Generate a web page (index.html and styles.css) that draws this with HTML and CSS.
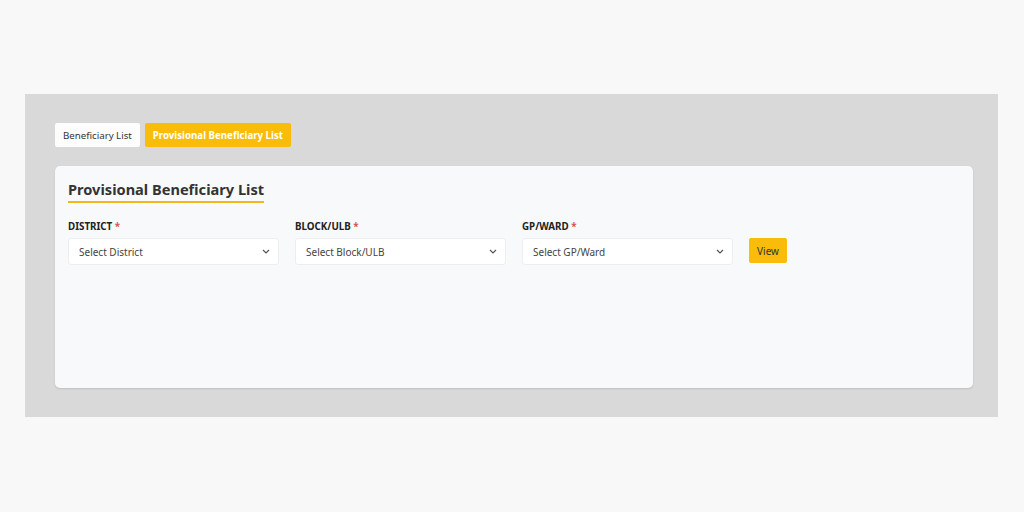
FILE: index.html
```html
<!DOCTYPE html>
<html>
<head>
<meta charset="utf-8">
<link rel="stylesheet" href="styles.css">
</head>
<body>
<div class="page">
  <div class="panel">
    <div class="tabs">
      <button class="tab">Beneficiary List</button>
      <button class="tab active">Provisional Beneficiary List</button>
    </div>
    <div class="card">
      <h2 class="title">Provisional Beneficiary List</h2>
      <div class="filters">
        <div class="field">
          <label class="label">DISTRICT <span class="req">*</span></label>
          <div class="select"><span>Select District</span><svg width="8" height="5" viewBox="0 0 8 5"><path d="M1 1l3 3 3-3" fill="none" stroke="#555" stroke-width="1.2"/></svg></div>
        </div>
        <div class="field">
          <label class="label">BLOCK/ULB <span class="req">*</span></label>
          <div class="select"><span>Select Block/ULB</span><svg width="8" height="5" viewBox="0 0 8 5"><path d="M1 1l3 3 3-3" fill="none" stroke="#555" stroke-width="1.2"/></svg></div>
        </div>
        <div class="field">
          <label class="label">GP/WARD <span class="req">*</span></label>
          <div class="select"><span>Select GP/Ward</span><svg width="8" height="5" viewBox="0 0 8 5"><path d="M1 1l3 3 3-3" fill="none" stroke="#555" stroke-width="1.2"/></svg></div>
        </div>
        <button class="view">View</button>
      </div>
    </div>
  </div>
</div>
</body>
</html>
```
FILE: styles.css
```css
* { box-sizing: border-box; }
html, body { margin: 0; padding: 0; }
body {
  background: #f8f8f8;
  font-family: "Noto Sans", "Open Sans", sans-serif;
  color: #333;
  width: 1024px;
  height: 512px;
}
.page { padding: 94px 26px 0 25px; }
.panel {
  background: #d9d9d9;
  height: 323px;
  padding: 29px 25px 0 30px;
}
.tabs { display: flex; gap: 5px; height: 24px; }
.tab {
  border: none;
  font-family: inherit;
  font-size: 9.7px;
  padding: 0 8px;
  height: 24px;
  background: #fdfdfd;
  color: #333;
  border-radius: 2px;
}
.tab.active {
  background: #f9bc0b;
  color: #fff;
  font-weight: 700;
}
.card {
  margin-top: 19px;
  background: #f8f9fb;
  border-radius: 5px;
  height: 222px;
  padding: 12px 13px;
  box-shadow: 0 1px 2px rgba(0,0,0,0.12);
}
.title {
  margin: 0;
  display: inline-block;
  font-size: 14.6px;
  font-weight: 700;
  color: #333;
  line-height: 22px;
  padding-bottom: 1px;
  border-bottom: 2px solid #f2b81a;
}
.filters {
  display: flex;
  align-items: flex-end;
  margin-top: 17px;
  gap: 16px;
}
.field { display: flex; flex-direction: column; width: 211px; }
.label {
  font-size: 9.8px;
  font-weight: 700;
  color: #222;
  line-height: 14px;
  margin-bottom: 4px;
}
.req { color: #d9534f; }
.select {
  height: 27px;
  background: #fff;
  border: 1px solid #eceef0;
  border-radius: 3px;
  display: flex;
  align-items: center;
  justify-content: space-between;
  padding: 0 8px 0 10px;
  font-size: 10px;
  color: #444;
}
.view {
  border: none;
  background: #f9bc0b;
  color: #333;
  font-family: inherit;
  font-size: 10px;
  width: 38px;
  height: 25px;
  border-radius: 2px;
  margin-bottom: 2px;
  padding: 0;
}
```
